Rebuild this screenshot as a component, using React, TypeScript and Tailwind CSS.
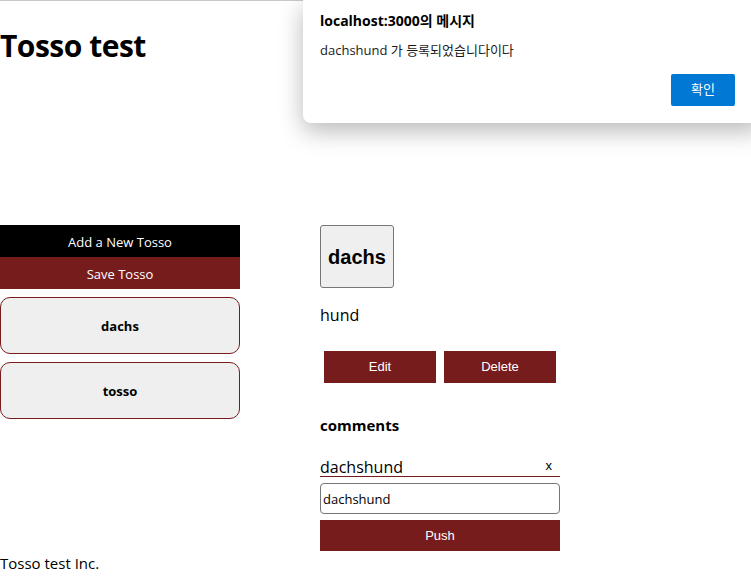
import { useState } from 'react'

const tossos = [
  { id: 1, title: 'dachs', body: 'hund' },
  { id: 2, title: 'tosso', body: '' },
]

const ui = "font-['Open_Sans','Noto_Sans_CJK_KR',sans-serif]"
const arial = "font-['Liberation_Sans',Arial,sans-serif]"

export default function App() {
  const [selected] = useState(tossos[0])
  const [comment, setComment] = useState('dachshund')

  return (
    <div className={`relative min-h-[577px] border-t border-[#c8c8c8] bg-white text-black ${ui}`}>
      <h1 className="mt-[23px] text-[30px] leading-[43px] font-bold tracking-[-0.5px]">Tosso test</h1>

      <div className="mt-[158px] flex gap-[80px]">
        {/* List */}
        <div className="w-[240px] flex flex-col">
          <button className="h-8 pt-[3px] bg-black text-white text-[13px]">Add a New Tosso</button>
          <button className="h-8 pt-[3px] bg-[#771c1c] text-white text-[13px]">Save Tosso</button>
          <div className="mt-2 flex flex-col gap-[8px]">
            {tossos.map((t) => (
              <div
                key={t.id}
                className="h-[57px] pt-[3px] rounded-[10px] border border-[#771c1c] bg-[#efefef] flex items-center justify-center text-[13px] font-bold"
              >
                {t.title}
              </div>
            ))}
          </div>
        </div>

        {/* Detail */}
        <div className="w-[240px] flex flex-col">
          <div className={`w-[74px] h-[63px] rounded-[3px] border border-[#767676] bg-[#efefef] flex items-center justify-center text-[20px] font-bold ${arial}`}>
            {selected.title}
          </div>
          <p className="mt-[16px] text-[16px] leading-[22px]">{selected.body}</p>
          <div className={`mt-[25px] flex ${arial}`}>
            <button className="mx-1 w-[112px] h-8 bg-[#771c1c] text-white text-[13px]">Edit</button>
            <button className="mx-1 w-[112px] h-8 bg-[#771c1c] text-white text-[13px]">Delete</button>
          </div>
          <h3 className="mt-[32px] text-[15px] font-bold leading-[20px]">comments</h3>
          <div className="mt-[22px] h-[20px] border-b border-[#771c1c] flex items-end justify-between text-[16px] leading-[20px]">
            <span className="-mb-[1px]">dachshund</span>
            <button className={`mr-[8px] text-[13px] ${arial}`}>x</button>
          </div>
          <input
            value={comment}
            onChange={(e) => setComment(e.target.value)}
            className="mt-[6px] h-[31px] w-full rounded-[4px] border border-[#767676] px-[2px] text-[13px] outline-none"
          />
          <button className={`mt-[6px] h-[31px] w-full bg-[#771c1c] text-white text-[13px] ${arial}`}>Push</button>
        </div>
      </div>

      <footer className="mt-[2px] text-[15px] leading-[20px]">Tosso test Inc.</footer>

      {/* alert dialog */}
      <div className="absolute top-[-1px] left-[303px] w-[460px] h-[123px] rounded-b-[8px] bg-white shadow-[0_8px_24px_rgba(0,0,0,0.28)] px-[17px] pt-[11px]">
        <p className="text-[14px] font-bold leading-[20px]">localhost:3000의 메시지</p>
        <p className="mt-[10px] text-[13px] leading-[18px] text-[#1a1a1a]">dachshund 가 등록되었습니다이다</p>
        <div className="mt-[15px] w-[415px] flex justify-end">
          <button className="w-[64px] h-[32px] rounded-[2px] bg-[#0078d4] text-white text-[13px]">확인</button>
        </div>
      </div>
    </div>
  )
}
